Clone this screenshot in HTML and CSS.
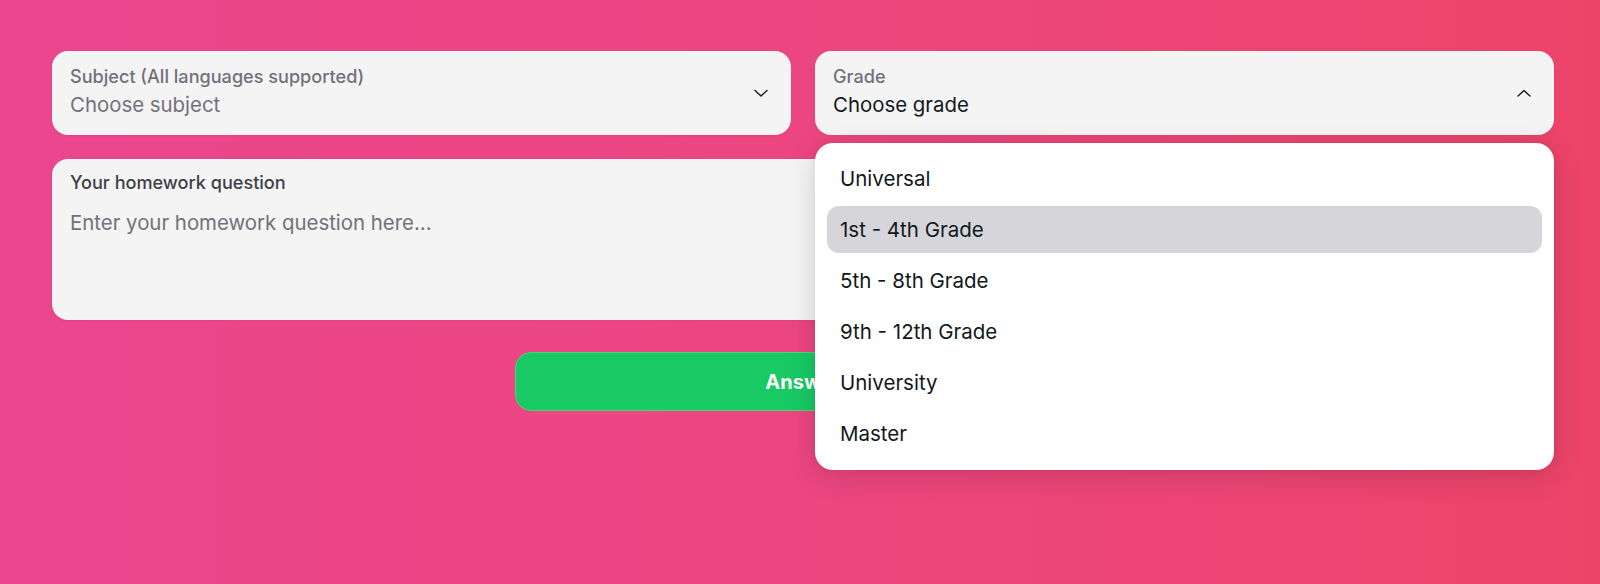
FILE: index.html
```html
<!DOCTYPE html>
<html lang="en">
<head>
<meta charset="utf-8">
<title>Homework helper</title>
<link rel="stylesheet" href="styles.css">
</head>
<body>
<main class="page">
  <div class="row">
    <div class="field select">
      <div class="field-text">
        <span class="label">Subject (All languages supported)</span>
        <span class="value placeholder">Choose subject</span>
      </div>
      <svg class="chev" width="16" height="16" viewBox="0 0 16 16"><polyline points="2,5.5 8,11 14,5.5" fill="none" stroke="#18181b" stroke-width="1.4" stroke-linecap="round" stroke-linejoin="round"/></svg>
    </div>
    <div class="select-wrap">
      <div class="field select open">
        <div class="field-text">
          <span class="label">Grade</span>
          <span class="value">Choose grade</span>
        </div>
        <svg class="chev" width="16" height="16" viewBox="0 0 16 16"><polyline points="2,11 8,5.5 14,11" fill="none" stroke="#18181b" stroke-width="1.4" stroke-linecap="round" stroke-linejoin="round"/></svg>
      </div>
      <ul class="menu">
        <li class="item">Universal</li>
        <li class="item active">1st - 4th Grade</li>
        <li class="item">5th - 8th Grade</li>
        <li class="item">9th - 12th Grade</li>
        <li class="item">University</li>
        <li class="item">Master</li>
      </ul>
    </div>
  </div>
  <div class="field area">
    <span class="label dark">Your homework question</span>
    <span class="value placeholder">Enter your homework question here...</span>
  </div>
  <div class="actions">
    <button class="answer">Answer</button>
  </div>
</main>
</body>
</html>
```

FILE: styles.css
```css
html, body {
  margin: 0;
  height: 100%;
}
body {
  background: linear-gradient(90deg, #ec4690 0%, #ec4680 50%, #ec4469 100%);
  font-family: Inter, "Noto Sans", "Liberation Sans", sans-serif;
  overflow: hidden;
}
.page {
  padding: 51px 46px 0 52px;
  display: flex;
  flex-direction: column;
}
.row {
  display: grid;
  grid-template-columns: 1fr 1fr;
  gap: 24px;
}
.select-wrap {
  position: relative;
}
.field {
  background: #f4f4f5;
  border-radius: 16px;
  box-shadow: 0 1px 3px rgba(0,0,0,0.06);
  box-sizing: border-box;
}
.select {
  height: 84px;
  display: flex;
  align-items: center;
  padding: 0 22px 0 18px;
}
.field-text {
  flex: 1;
  display: flex;
  flex-direction: column;
  gap: 4px;
  padding-bottom: 2px;
}
.label {
  font-size: 18.1px;
  font-weight: 500;
  line-height: 22px;
  color: #71717a;
}
.label.dark {
  color: #3f3f46;
}
.value {
  font-size: 20.4px;
  line-height: 28px;
  color: #11181c;
}
.value.placeholder {
  color: #71717a;
}
.chev {
  flex: none;
}
.area {
  margin-top: 24px;
  height: 161px;
  padding: 12px 18px;
  display: flex;
  flex-direction: column;
  gap: 16px;
}
.actions {
  display: flex;
  justify-content: center;
  margin-top: 32px;
}
.answer {
  width: 576px;
  height: 59px;
  background: #18c964;
  border: 1px solid #4fd37a;
  border-radius: 16px;
  color: #fff;
  font-family: inherit;
  font-size: 20px;
  font-weight: 700;
}
.menu {
  position: absolute;
  left: 0;
  right: 0;
  top: calc(100% + 8px);
  margin: 0;
  padding: 12px 12px 13px;
  list-style: none;
  background: #fff;
  border-radius: 18px;
  box-shadow: 0 6px 30px rgba(0,0,0,0.14), 0 0 8px rgba(0,0,0,0.06);
  display: flex;
  flex-direction: column;
  gap: 4px;
}
.item {
  height: 47px;
  display: flex;
  align-items: center;
  padding-left: 13px;
  border-radius: 12px;
  font-size: 20.5px;
  color: #11181c;
}
.item.active {
  background: #d6d6da;
}
```
